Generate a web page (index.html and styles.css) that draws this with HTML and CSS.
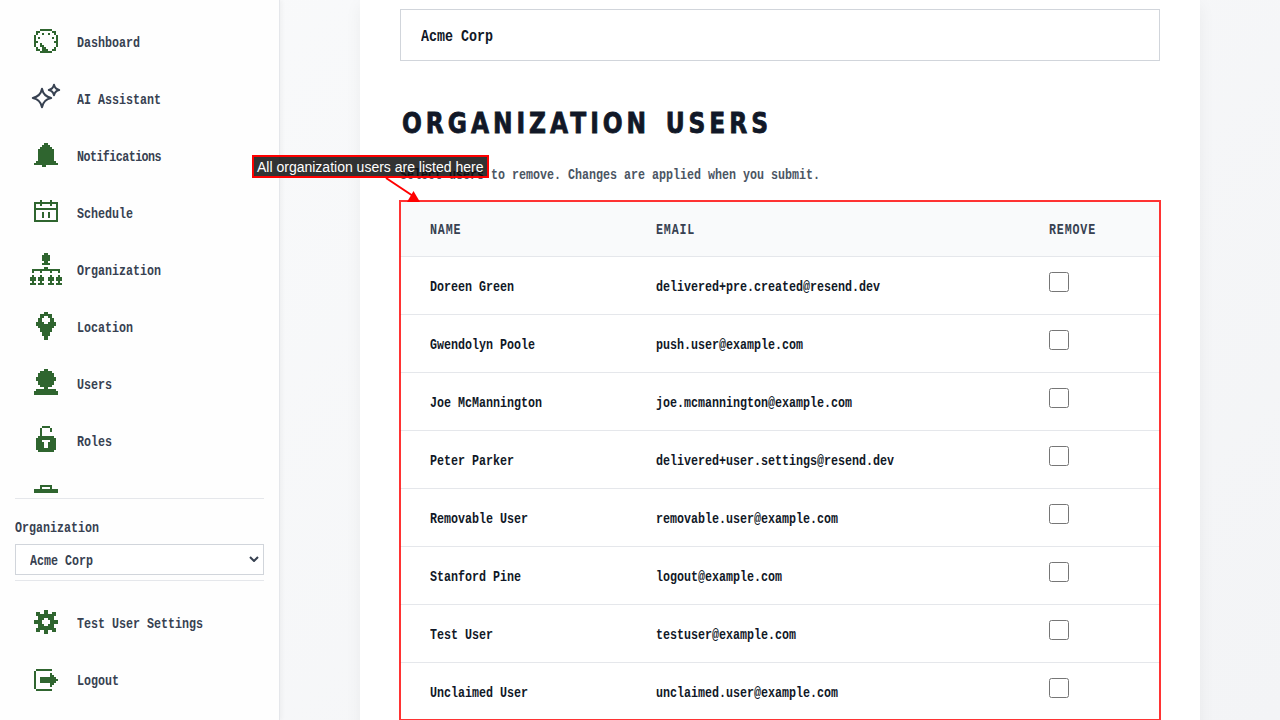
FILE: index.html
```html
<!doctype html>
<html lang="en">
  <head>
    <meta charset="UTF-8" />
    <meta name="viewport" content="width=device-width, initial-scale=1.0" />
    <title>Organization Users</title>
    <link rel="stylesheet" href="styles.css">
  </head>
  <body>
    <aside class="sidebar">
      <nav class="nav">
        <a class="nav-item">
          <svg class="icon" viewBox="0 0 16 16"><path d="M5 2.5h6M3 3.5h2M11 3.5h2M3 4.5h1M6 4.5h1M9 4.5h1M12 4.5h1M2 5.5h1M13 5.5h1M2 6.5h1M4 6.5h1M11 6.5h1M13 6.5h1M2 7.5h1M13 7.5h1M2 8.5h2M12 8.5h2M2 9.5h1M5 9.5h1M13 9.5h1M2 10.5h1M5 10.5h2M13 10.5h1M3 11.5h1M6 11.5h2M12 11.5h1M3 12.5h2M6 12.5h3M11 12.5h2M5 13.5h6" /></svg>
          <span class="text">Dashboard</span>
        </a>
        <a class="nav-item">
          <svg class="icon sparkle" viewBox="0 0 32 32"><path d="M12 6.800Q13.500 14.500 21.200 16Q13.500 17.500 12 25.200Q10.500 17.500 2.800 16Q10.500 14.500 12 6.800ZM24 2.800Q25 7 29.200 8Q25 9 24 13.200Q23 9 18.800 8Q23 7 24 2.800Z" /></svg>
          <span class="text">AI Assistant</span>
        </a>
        <a class="nav-item">
          <svg class="icon" viewBox="0 0 16 16"><path d="M7 2.5h2M6 3.5h4M5 4.5h6M4 5.5h8M4 6.5h8M4 7.5h8M4 8.5h8M4 9.5h8M4 10.5h8M3 11.5h10M2 12.5h12M6 13.5h2" /></svg>
          <span class="text tight">Notifications</span>
        </a>
        <a class="nav-item">
          <svg class="icon" viewBox="0 0 16 16"><path d="M5 2.5h1M10 2.5h1M2 3.5h12M2 4.5h1M5 4.5h1M10 4.5h1M13 4.5h1M2 5.5h1M13 5.5h1M2 6.5h12M2 7.5h1M13 7.5h1M2 8.5h1M6 8.5h1M9 8.5h1M13 8.5h1M2 9.5h1M6 9.5h1M9 9.5h1M13 9.5h1M2 10.5h1M6 10.5h1M9 10.5h1M13 10.5h1M2 11.5h1M13 11.5h1M2 12.5h12" /></svg>
          <span class="text">Schedule</span>
        </a>
        <a class="nav-item">
          <svg class="icon" viewBox="0 0 16 16"><path d="M7 .5h2M6 1.5h4M6 2.5h4M6 3.5h4M7 4.5h2M6 5.5h4M7 7.5h2M1 8.5h14M1 9.5h1M5 9.5h1M10 9.5h1M14 9.5h1M1 11.5h1M5 11.5h1M10 11.5h1M14 11.5h1M0 12.5h3M4 12.5h3M9 12.5h3M13 12.5h3M0 13.5h3M4 13.5h3M9 13.5h3M13 13.5h3M1 14.5h1M5 14.5h1M10 14.5h1M14 14.5h1M0 15.5h3M4 15.5h3M9 15.5h3M13 15.5h3" /></svg>
          <span class="text">Organization</span>
        </a>
        <a class="nav-item">
          <svg class="icon" viewBox="0 0 16 16"><path d="M7 1.5h2M5 2.5h6M5 3.5h2M9 3.5h2M4 4.5h2M10 4.5h2M4 5.5h2M10 5.5h2M3 6.5h4M9 6.5h4M3 7.5h10M4 8.5h8M5 9.5h6M5 10.5h6M6 11.5h4M6 12.5h4M7 13.5h2M7 14.5h2" /></svg>
          <span class="text">Location</span>
        </a>
        <a class="nav-item">
          <svg class="icon" viewBox="0 0 16 16"><path d="M7 1.5h2M5 2.5h6M4 3.5h8M4 4.5h8M3 5.5h10M3 6.5h10M4 7.5h8M4 8.5h8M5 9.5h6M7 10.5h2M3 11.5h10M2 12.5h12M2 13.5h12" /></svg>
          <span class="text">Users</span>
        </a>
        <a class="nav-item">
          <svg class="icon" viewBox="0 0 16 16"><path d="M6 1.5h4M5 2.5h1M10 2.5h1M5 3.5h1M10 3.5h1M5 4.5h1M5 5.5h1M4 6.5h8M3 7.5h10M3 8.5h3M10 8.5h3M3 9.5h4M9 9.5h4M3 10.5h4M9 10.5h4M3 11.5h4M9 11.5h4M3 12.5h10M4 13.5h8" /></svg>
          <span class="text">Roles</span>
        </a>
        <a class="nav-item">
          <svg class="icon" viewBox="0 0 16 16"><path d="M5 2.5h6M5 3.5h1M10 3.5h1M2 4.5h12M2 5.5h12M2 6.5h12M2 7.5h12" /></svg>
        </a>
      </nav>
      <div class="org-switch">
        <label class="org-label"><span class="text">Organization</span></label>
        <button class="org-select">
          <span class="text">Acme Corp</span>
          <svg class="chevron" viewBox="0 0 10 6"><path d="M1 1l4 4 4-4" /></svg>
        </button>
      </div>
      <div class="nav-bottom">
        <a class="nav-item">
          <svg class="icon" viewBox="0 0 16 16"><path d="M7 2.5h2M3 3.5h2M7 3.5h2M11 3.5h2M3 4.5h10M4 5.5h8M4 6.5h3M9 6.5h3M2 7.5h4M10 7.5h4M2 8.5h4M10 8.5h4M4 9.5h3M9 9.5h3M4 10.5h8M3 11.5h10M3 12.5h2M7 12.5h2M11 12.5h2M7 13.5h2" /></svg>
          <span class="text">Test User Settings</span>
        </a>
        <a class="nav-item">
          <svg class="icon" viewBox="0 0 16 16"><path d="M3 3.500h8M2 4.500h1M2 5.500h1M10 5.500h1M2 6.500h1M10 6.500h2M2 7.500h1M5 7.500h8M2 8.500h1M5 8.500h9M2 9.500h1M5 9.500h8M2 10.500h1M10 10.500h2M2 11.500h1M10 11.500h1M2 12.500h1M3 13.500h8" /></svg>
          <span class="text">Logout</span>
        </a>
      </div>
    </aside>

    <main class="main">
      <section class="card">
        <div class="org-name"><span class="text">Acme Corp</span></div>
        <h2 class="title"><span>ORGANIZATION USERS</span></h2>
        <p class="hint"><span class="text">Select users to remove. Changes are applied when you submit.</span></p>
        <div class="table-wrap">
          <table class="users">
            <thead>
              <tr>
                <th class="col-name"><span class="text">NAME</span></th>
                <th class="col-email"><span class="text">EMAIL</span></th>
                <th><span class="text">REMOVE</span></th>
              </tr>
            </thead>
            <tbody>
              <tr>
                <td><span class="text">Doreen Green</span></td>
                <td><span class="text">delivered+pre.created@resend.dev</span></td>
                <td><input type="checkbox" /></td>
              </tr>
              <tr>
                <td><span class="text">Gwendolyn Poole</span></td>
                <td><span class="text">push.user@example.com</span></td>
                <td><input type="checkbox" /></td>
              </tr>
              <tr>
                <td><span class="text">Joe McMannington</span></td>
                <td><span class="text">joe.mcmannington@example.com</span></td>
                <td><input type="checkbox" /></td>
              </tr>
              <tr>
                <td><span class="text">Peter Parker</span></td>
                <td><span class="text">delivered+user.settings@resend.dev</span></td>
                <td><input type="checkbox" /></td>
              </tr>
              <tr>
                <td><span class="text">Removable User</span></td>
                <td><span class="text">removable.user@example.com</span></td>
                <td><input type="checkbox" /></td>
              </tr>
              <tr>
                <td><span class="text">Stanford Pine</span></td>
                <td><span class="text">logout@example.com</span></td>
                <td><input type="checkbox" /></td>
              </tr>
              <tr>
                <td><span class="text">Test User</span></td>
                <td><span class="text">testuser@example.com</span></td>
                <td><input type="checkbox" /></td>
              </tr>
              <tr>
                <td><span class="text">Unclaimed User</span></td>
                <td><span class="text">unclaimed.user@example.com</span></td>
                <td><input type="checkbox" /></td>
              </tr>
            </tbody>
          </table>
        </div>
      </section>
    </main>

    <div class="callout">All organization users are listed here</div>
    <svg class="callout-arrow" viewBox="0 0 40 26">
      <path class="line" d="M3 1L30 19" />
      <path class="head" d="M37 25L24 25L30.500 14Z" />
    </svg>
  </body>
</html>
```
FILE: styles.css
```css
* {
  box-sizing: border-box;
  margin: 0;
  padding: 0;
}

body {
  display: flex;
  height: 720px;
  overflow: hidden;
  font-family: "Liberation Mono", monospace;
  font-size: 14px;
  font-weight: 700;
  line-height: 20px;
  color: #374151;
  background: linear-gradient(135deg, #f9fafb 0%, #f3f4f6 100%);
}

/* narrow terminal look: half an em per character */
.text {
  display: inline-block;
  white-space: nowrap;
  transform: scaleX(0.8333);
  transform-origin: left center;
}

.text.tight {
  letter-spacing: -0.65px;
}

.sidebar {
  display: flex;
  flex-direction: column;
  flex: none;
  width: 280px;
  padding: 0 15px;
  background: #fefefe;
  border-right: 1px solid #e5e7eb;
  box-shadow: 2px 0 4px rgba(0, 0, 0, 0.04);
}

.nav {
  height: 493px;
  padding-top: 13px;
  overflow: hidden;
}

.nav-item {
  display: flex;
  align-items: center;
  gap: 15px;
  height: 57px;
  padding-left: 15px;
}

.nav-item .text {
  margin-top: 3px;
}

.icon {
  flex: none;
  width: 32px;
  height: 32px;
  margin-bottom: 1px;
  fill: none;
  stroke: #2f652f;
  stroke-width: 1;
  shape-rendering: crispEdges;
}

.icon.sparkle {
  stroke: #374151;
  stroke-width: 2;
  stroke-linejoin: round;
  shape-rendering: auto;
}

.org-switch {
  height: 83px;
  margin-top: 5px;
  padding-top: 19px;
  border-top: 1px solid #e5e7eb;
  border-bottom: 1px solid #e5e7eb;
}

.org-label {
  display: block;
  height: 26px;
}

.org-select {
  display: flex;
  justify-content: space-between;
  align-items: center;
  width: 249px;
  height: 31px;
  padding: 2px 4px 0 14px;
  font: inherit;
  color: inherit;
  background: #fff;
  border: 1px solid #d1d5db;
}

.chevron {
  width: 10px;
  height: 6px;
  margin-top: -3px;
  fill: none;
  stroke: #374151;
  stroke-width: 2;
}

.nav-bottom {
  padding-top: 13px;
}

.main {
  flex: 1;
  padding: 0 80px;
}

.card {
  width: 840px;
  height: 740px;
  padding: 9px 40px 0;
  background: #fff;
  box-shadow: 0 4px 16px rgba(0, 0, 0, 0.05);
}

.org-name {
  height: 52px;
  padding: 17px 20px 0;
  font-size: 16px;
  color: #111827;
  border: 1px solid #d1d5db;
}

.title {
  height: 40px;
  margin-top: 42px;
  padding-left: 2px;
  font: 700 27.5px/40px "DejaVu Sans", sans-serif;
  letter-spacing: 4.65px;
  word-spacing: 4px;
  color: #111827;
}

.title span {
  display: inline-block;
  white-space: nowrap;
  transform: scaleX(0.85);
  transform-origin: left center;
  -webkit-text-stroke: 0.8px #111827;
}

.hint {
  height: 20px;
  margin-top: 22px;
  color: #4b5563;
}

.table-wrap {
  position: relative;
  margin-top: 16px;
}

.table-wrap::after {
  content: "";
  position: absolute;
  inset: -1px -1px 0;
  border: 2px solid rgba(255, 0, 0, 0.8);
}

.users {
  width: 760px;
  table-layout: fixed;
  border-collapse: separate;
  border-spacing: 0;
}

.users th {
  height: 56px;
  padding: 2px 0 0 30px;
  text-align: left;
  letter-spacing: 1px;
  background: #f9fafb;
  border-bottom: 1px solid #e5e7eb;
}

.users .col-name {
  width: 227px;
}

.users .col-email {
  width: 392px;
}

.users td {
  height: 58px;
  padding: 3px 0 0 30px;
  color: #111827;
  border-bottom: 1px solid #e5e7eb;
}

.users tr :nth-child(2) {
  padding-left: 29px;
}

.users tr :nth-child(3) {
  padding-left: 29.5px;
}

.users input {
  display: block;
  width: 20px;
  height: 20px;
  margin-top: -10px;
}

.callout {
  position: absolute;
  left: 252px;
  top: 155px;
  width: 237px;
  height: 23px;
  padding-left: 3px;
  font: 14px/20px "Liberation Sans", Arial, sans-serif;
  white-space: nowrap;
  color: #fff;
  background: rgba(0, 0, 0, 0.8);
  border: 2px solid #f00;
}

.callout-arrow {
  position: absolute;
  left: 383px;
  top: 177px;
  width: 40px;
  height: 26px;
}

.callout-arrow .line {
  stroke: #f00;
  stroke-width: 2;
}

.callout-arrow .head {
  fill: #f00;
}
```
